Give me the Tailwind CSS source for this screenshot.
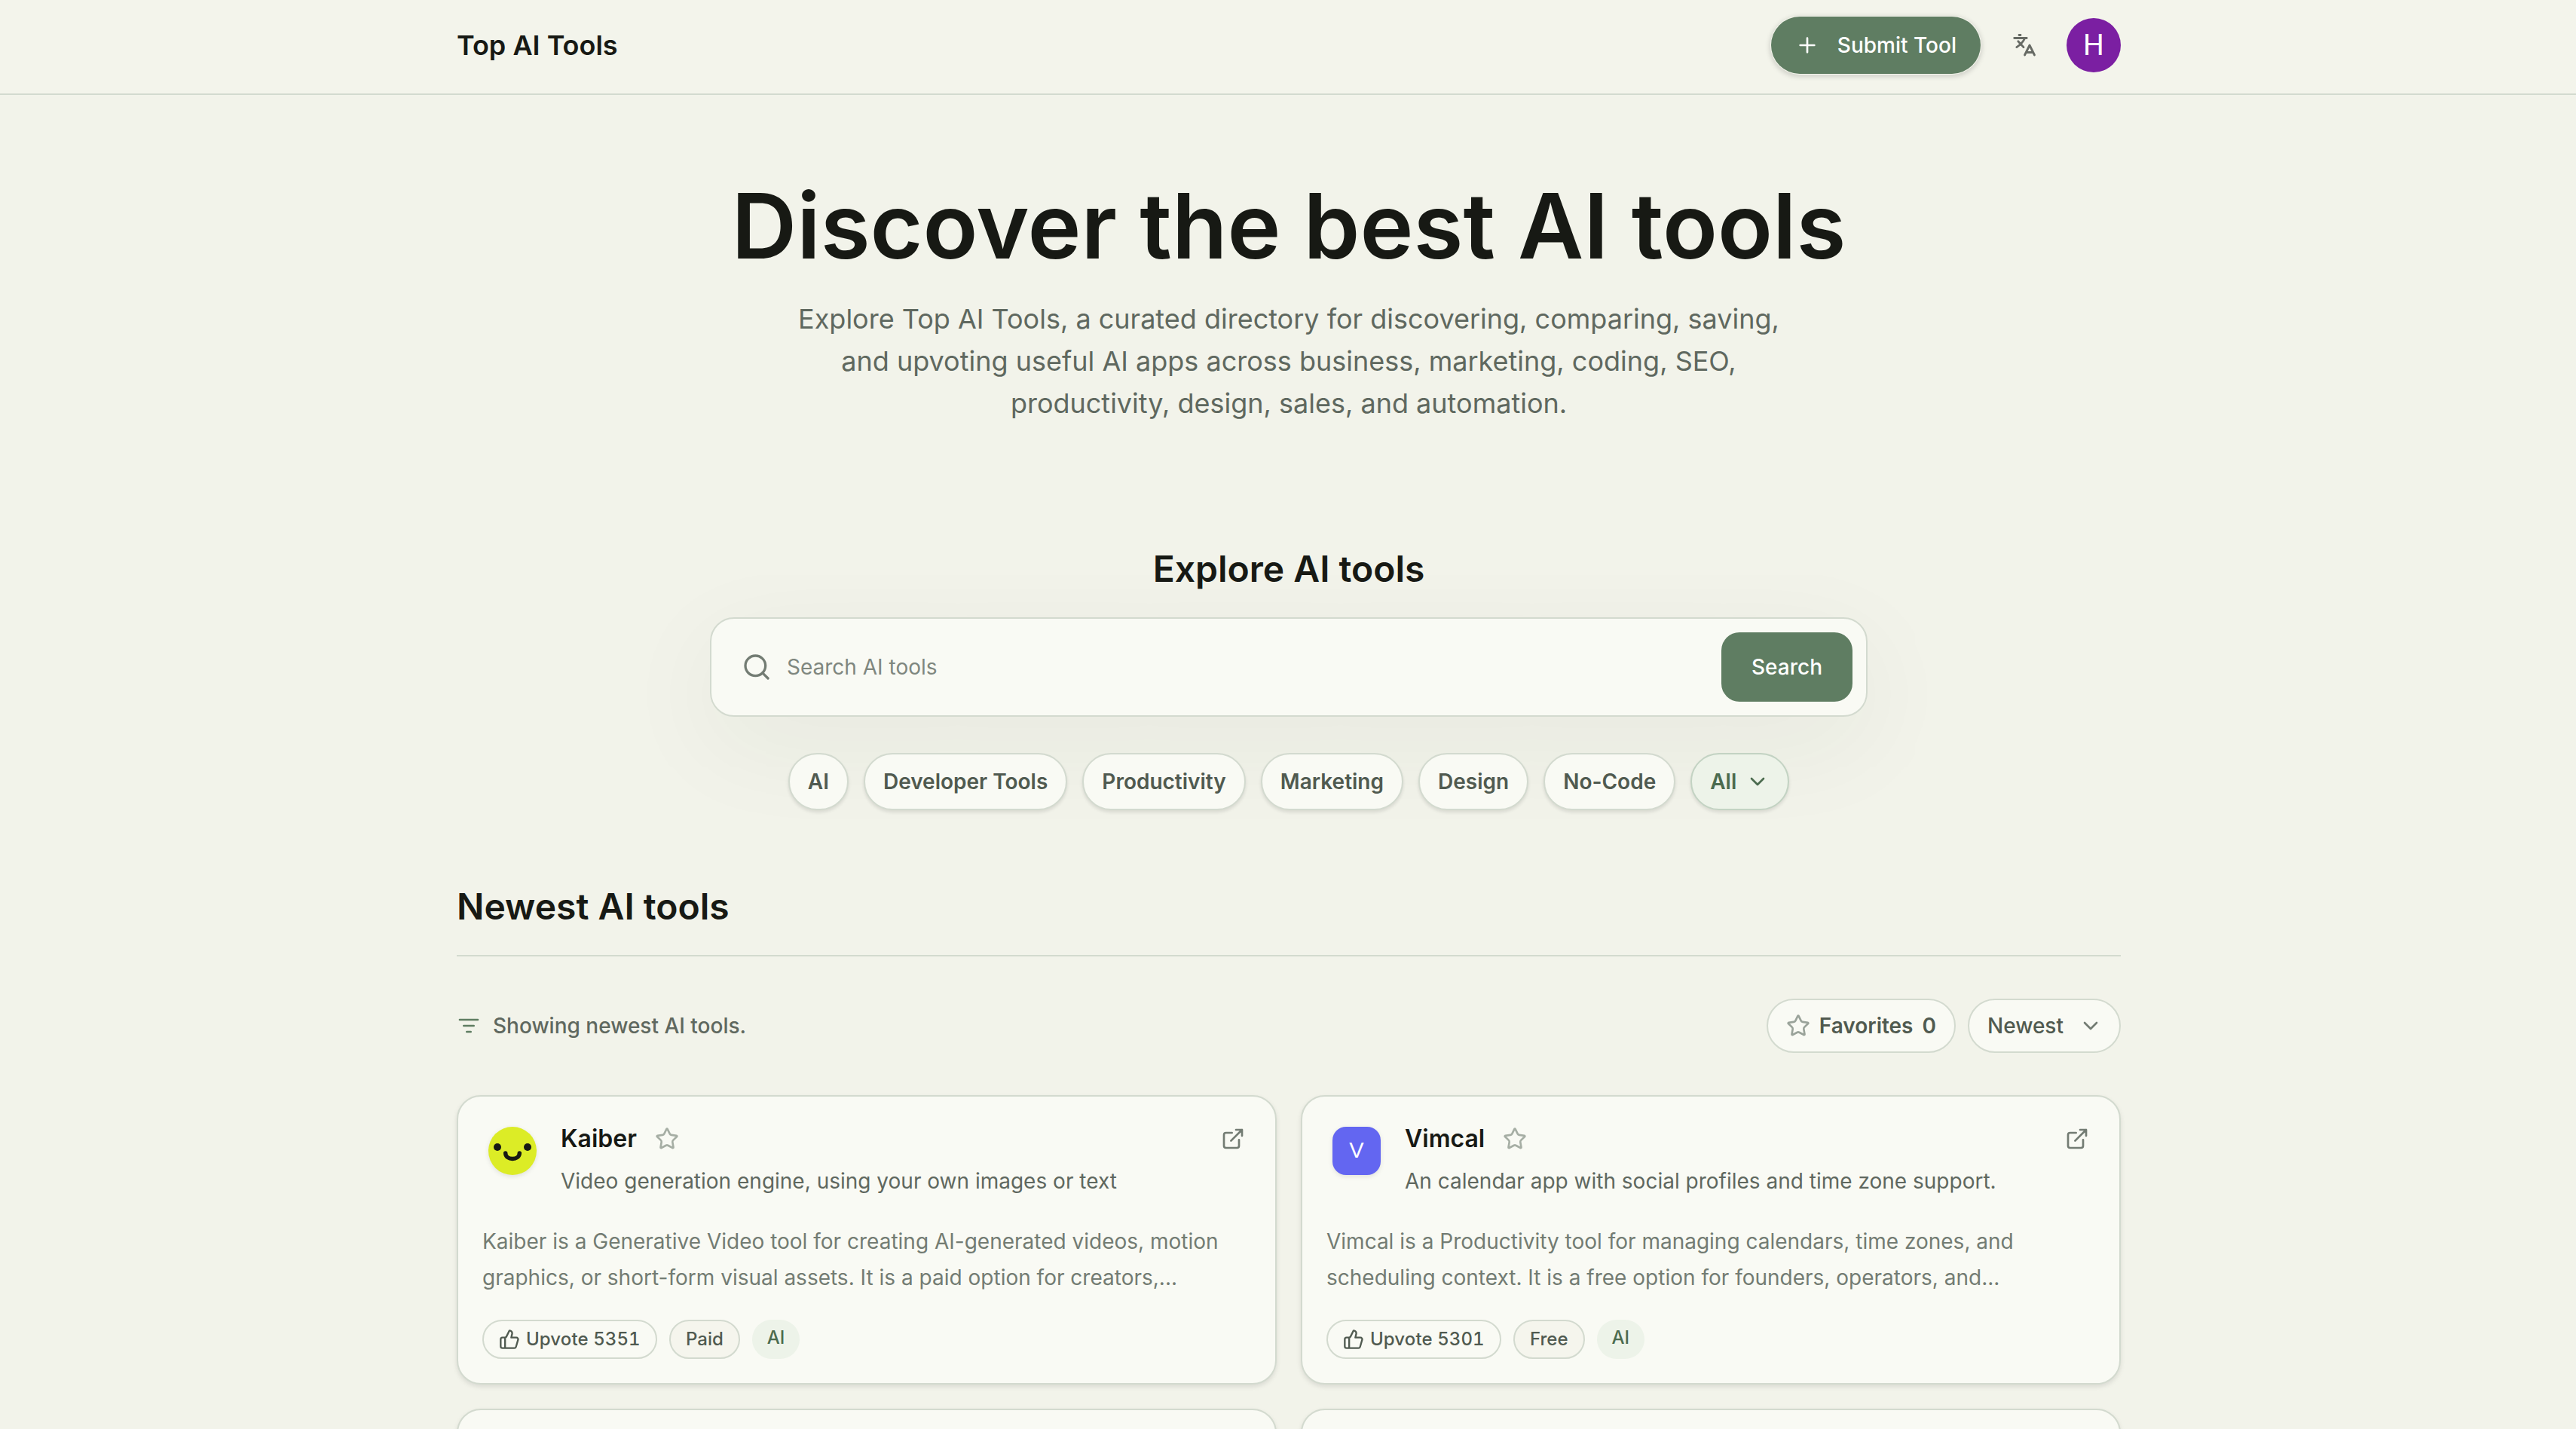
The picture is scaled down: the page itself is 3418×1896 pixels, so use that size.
<!DOCTYPE html>
<html lang="en" class="text-[32px]">

<head>
    <meta charset="UTF-8">
    <meta name="viewport" content="width=device-width, initial-scale=1">
    <title>Top AI Tools</title>
    <script src="https://cdn.jsdelivr.net/npm/@tailwindcss/browser@4"></script>
</head>

<body class="h-screen overflow-hidden bg-[#f2f3ea] pl-[2px] font-['Inter',sans-serif] text-[#171914] antialiased">
    <!-- Icons -->
    <svg class="hidden">
        <symbol id="star" viewBox="0 0 24 24">
            <path d="M11.525 2.295a.53.53 0 0 1 .95 0l2.31 4.679a2.123 2.123 0 0 0 1.595 1.16l5.166.756a.53.53 0 0 1 .294.904l-3.736 3.638a2.123 2.123 0 0 0-.611 1.878l.882 5.14a.53.53 0 0 1-.771.56l-4.618-2.428a2.122 2.122 0 0 0-1.973 0L6.396 21.01a.53.53 0 0 1-.77-.56l.881-5.139a2.122 2.122 0 0 0-.611-1.879L2.16 9.795a.53.53 0 0 1 .294-.906l5.165-.755a2.122 2.122 0 0 0 1.597-1.16z" />
        </symbol>
        <symbol id="external" viewBox="0 0 24 24">
            <path d="M15 3h6v6M10 14 21 3M18 13v6a2 2 0 0 1-2 2H5a2 2 0 0 1-2-2V8a2 2 0 0 1 2-2h6" />
        </symbol>
        <symbol id="thumb" viewBox="0 0 24 24">
            <path d="M7 10v12M15 5.88 14 10h5.83a2 2 0 0 1 1.92 2.56l-2.33 8A2 2 0 0 1 17.5 22H4a2 2 0 0 1-2-2v-8a2 2 0 0 1 2-2h2.76a2 2 0 0 0 1.79-1.11L12 2a3.13 3.13 0 0 1 3 3.88Z" />
        </symbol>
        <symbol id="chevron" viewBox="0 0 24 24">
            <path d="m6 9 6 6 6-6" />
        </symbol>
    </svg>

    <!-- Header -->
    <header class="-ml-[2px] h-[126px] border-b-2 border-[#d3dacf] bg-[#f3f4eb] pl-[2px]">
        <div class="mx-auto flex h-[120px] w-[2208px] items-center justify-between">
            <a class="text-lg font-semibold">Top AI Tools</a>
            <div class="flex items-center gap-[20px]">
                <button class="flex h-[80px] items-center gap-[24px] rounded-full border-2 border-transparent bg-[#5f7d62] bg-clip-padding px-[32px] text-sm font-medium text-white shadow-[0_2px_6px_rgba(0,0,0,0.15)]">
                    <svg class="size-[32px] fill-none stroke-current stroke-2" viewBox="0 0 24 24" stroke-linecap="round">
                        <path d="M5 12h14M12 5v14" />
                    </svg>
                    Submit Tool
                </button>
                <button class="flex size-[72px] items-center justify-center">
                    <svg class="size-[36px] fill-none stroke-[#666a64] stroke-[2.8]" viewBox="0 0 36 36" stroke-linecap="round" stroke-linejoin="round">
                        <path d="M11 4.500h2M4.700 8.500h16.500M18.500 9C16.500 13.500 12.500 17.500 7.800 20.600M9.800 12.700 17 20.600M18.500 31 25 18 31.500 31M20.500 27.500h8.500" />
                    </svg>
                </button>
                <div class="flex size-[72px] items-center justify-center rounded-full bg-[#7b1fa2] font-['Roboto',sans-serif] text-[39px] text-white">H</div>
            </div>
        </div>
    </header>

    <main class="mx-auto w-[2208px]">
        <!-- Hero -->
        <section class="pt-[114px] text-center">
            <h1 class="text-[120px] leading-none font-semibold">Discover the best AI tools</h1>
            <p class="mx-auto mt-[35px] w-[1344px] text-lg leading-[56px] text-[#5f685f]">Explore Top AI Tools, a curated directory for discovering, comparing, saving, and upvoting useful AI apps across business, marketing, coding, SEO, productivity, design, sales, and automation.</p>
        </section>

        <!-- Search -->
        <section class="mx-auto mt-[160px] w-[1536px]">
            <h2 class="text-center text-2xl leading-[64px] font-semibold">Explore AI tools</h2>
            <div class="mt-[32px] flex h-[132px] items-center rounded-[32px] border-2 border-[#d3dacf] bg-[#f9faf4] pr-[18px] pl-[40px] shadow-[0_36px_140px_rgba(34,48,34,0.055)]">
                <svg class="size-[40px] fill-none stroke-[#737c73] stroke-2" viewBox="0 0 24 24" stroke-linecap="round">
                    <circle cx="11" cy="11" r="8" />
                    <path d="m21 21-4.300-4.300" />
                </svg>
                <span class="ml-[20px] flex-1 text-sm text-[#7f877f]">Search AI tools</span>
                <button class="h-[92px] w-[174px] rounded-[24px] bg-[#5f7d62] text-sm font-medium text-white">Search</button>
            </div>
            <div class="mt-[48px] flex justify-center gap-[20px] text-sm font-semibold text-[#505a50]">
                <span class="flex h-[76px] items-center rounded-full border-2 border-[#d3dacf] bg-[#f9faf4] px-[24px] shadow-[0_3px_4px_rgba(0,0,0,0.1)]">AI</span>
                <span class="flex h-[76px] items-center rounded-full border-2 border-[#d3dacf] bg-[#f9faf4] px-[24px] shadow-[0_3px_4px_rgba(0,0,0,0.1)]">Developer Tools</span>
                <span class="flex h-[76px] items-center rounded-full border-2 border-[#d3dacf] bg-[#f9faf4] px-[24px] shadow-[0_3px_4px_rgba(0,0,0,0.1)]">Productivity</span>
                <span class="flex h-[76px] items-center rounded-full border-2 border-[#d3dacf] bg-[#f9faf4] px-[24px] shadow-[0_3px_4px_rgba(0,0,0,0.1)]">Marketing</span>
                <span class="flex h-[76px] items-center rounded-full border-2 border-[#d3dacf] bg-[#f9faf4] px-[24px] shadow-[0_3px_4px_rgba(0,0,0,0.1)]">Design</span>
                <span class="flex h-[76px] items-center rounded-full border-2 border-[#d3dacf] bg-[#f9faf4] px-[24px] shadow-[0_3px_4px_rgba(0,0,0,0.1)]">No-Code</span>
                <span class="flex h-[76px] items-center gap-[12px] rounded-full border-2 border-[#c3d3c3] bg-[#edf3e9] px-[24px] text-[#4b6b4f] shadow-[0_3px_4px_rgba(0,0,0,0.1)]">
                    All
                    <svg class="size-[32px] fill-none stroke-current stroke-2" stroke-linecap="round" stroke-linejoin="round"><use href="#chevron" /></svg>
                </span>
            </div>
        </section>

        <!-- Newest tools -->
        <section class="mt-[96px]">
            <h2 class="border-b-2 border-[#d3dacf] pb-[32px] text-2xl leading-[64px] font-semibold">Newest AI tools</h2>
            <div class="mt-[56px] flex h-[72px] items-center justify-between text-sm">
                <div class="flex items-center gap-[16px] font-medium text-[#5f685f]">
                    <svg class="size-[32px] fill-none stroke-[#5f7d62] stroke-2" viewBox="0 0 24 24" stroke-linecap="round">
                        <path d="M3 6h18M7 12h10M10 18h4" />
                    </svg>
                    Showing newest AI tools.
                </div>
                <div class="flex gap-[16px] text-[#505a50]">
                    <button class="flex h-[72px] items-center gap-[12px] rounded-full border-2 border-[#d3dacf] bg-[#f9faf4] px-[24px] font-semibold">
                        <svg class="size-[32px] fill-none stroke-[#9aa39a] stroke-2" stroke-linejoin="round"><use href="#star" /></svg>
                        <span>Favorites</span>
                        <span>0</span>
                    </button>
                    <button class="flex h-[72px] w-[203px] items-center justify-between rounded-full border-2 border-[#d3dacf] bg-[#f9faf4] pr-[22px] pl-[24px] font-medium">
                        Newest
                        <svg class="size-[32px] fill-none stroke-[#737c73] stroke-2" stroke-linecap="round" stroke-linejoin="round"><use href="#chevron" /></svg>
                    </button>
                </div>
            </div>

            <div class="mt-[56px] grid grid-cols-2 gap-[32px]">
                <article class="h-[384px] rounded-[32px] border-2 border-[#d3dacf] bg-[#f9faf4] p-[32px] shadow-[0_3px_6px_rgba(0,0,0,0.1)]">
                    <div class="flex gap-[24px]">
                        <div class="size-[80px] p-[8px]">
                            <svg class="size-[64px] rounded-full bg-[#dcec26] shadow-[0_2px_6px_rgba(0,0,0,0.1)]" viewBox="0 0 64 64">
                                <circle cx="12" cy="27" r="5" fill="#171914" />
                                <circle cx="52" cy="27" r="5" fill="#171914" />
                                <path d="M22.700 35C22.700 45 41.300 45 41.300 35" fill="none" stroke="#171914" stroke-width="5.500" stroke-linecap="round" />
                            </svg>
                        </div>
                        <div class="flex-1">
                            <div class="flex h-[48px] items-center">
                                <h3 class="text-base font-semibold">Kaiber</h3>
                                <svg class="ml-[24px] size-[32px] fill-none stroke-[#a6aea4] stroke-2" stroke-linejoin="round"><use href="#star" /></svg>
                                <svg class="mr-[8px] ml-auto size-[32px] fill-none stroke-[#737c73] stroke-2" stroke-linecap="round" stroke-linejoin="round"><use href="#external" /></svg>
                            </div>
                            <p class="mt-[8px] text-sm leading-[48px] text-[#5f685f]">Video generation engine, using your own images or text</p>
                        </div>
                    </div>
                    <p class="mt-[32px] text-sm leading-[48px] text-[#737c73]">Kaiber is a Generative Video tool for creating AI-generated videos, motion<br>graphics, or short-form visual assets. It is a paid option for creators,...</p>
                    <div class="mt-[32px] flex h-[52px] gap-[16px] text-xs leading-[48px] font-medium text-[#505a50]">
                        <span class="flex w-[232px] items-center gap-[8px] rounded-full border-2 border-[#d3dacf] pl-[20px] tracking-[0.1px] whitespace-nowrap tabular-nums">
                            <svg class="size-[28px] fill-none stroke-current stroke-2" stroke-linecap="round" stroke-linejoin="round"><use href="#thumb" /></svg>
                            Upvote 5351
                        </span>
                        <span class="rounded-full border-2 border-[#d3dacf] bg-[#f5f5ed] px-[20px]">Paid</span>
                        <span class="rounded-full bg-[#edf3e9] px-[20px] text-[#4b6b4f]">AI</span>
                    </div>
                </article>

                <article class="h-[384px] rounded-[32px] border-2 border-[#d3dacf] bg-[#f9faf4] p-[32px] shadow-[0_3px_6px_rgba(0,0,0,0.1)]">
                    <div class="flex gap-[24px]">
                        <div class="size-[80px] p-[8px]">
                            <div class="flex size-[64px] items-center justify-center rounded-[18px] bg-[#6366f1] font-['Liberation_Sans',sans-serif] text-[29px] text-white shadow-[0_2px_6px_rgba(0,0,0,0.1)]">V</div>
                        </div>
                        <div class="flex-1">
                            <div class="flex h-[48px] items-center">
                                <h3 class="text-base font-semibold">Vimcal</h3>
                                <svg class="ml-[24px] size-[32px] fill-none stroke-[#a6aea4] stroke-2" stroke-linejoin="round"><use href="#star" /></svg>
                                <svg class="mr-[8px] ml-auto size-[32px] fill-none stroke-[#737c73] stroke-2" stroke-linecap="round" stroke-linejoin="round"><use href="#external" /></svg>
                            </div>
                            <p class="mt-[8px] text-sm leading-[48px] text-[#5f685f]">An calendar app with social profiles and time zone support.</p>
                        </div>
                    </div>
                    <p class="mt-[32px] text-sm leading-[48px] text-[#737c73]">Vimcal is a Productivity tool for managing calendars, time zones, and<br>scheduling context. It is a free option for founders, operators, and...</p>
                    <div class="mt-[32px] flex h-[52px] gap-[16px] text-xs leading-[48px] font-medium text-[#505a50]">
                        <span class="flex w-[232px] items-center gap-[8px] rounded-full border-2 border-[#d3dacf] pl-[20px] tracking-[0.1px] whitespace-nowrap tabular-nums">
                            <svg class="size-[28px] fill-none stroke-current stroke-2" stroke-linecap="round" stroke-linejoin="round"><use href="#thumb" /></svg>
                            Upvote 5301
                        </span>
                        <span class="rounded-full border-2 border-[#d3dacf] bg-[#f5f5ed] px-[20px]">Free</span>
                        <span class="rounded-full bg-[#edf3e9] px-[20px] text-[#4b6b4f]">AI</span>
                    </div>
                </article>

                <!-- Next row, cut off by the viewport -->
                <article class="h-[384px] rounded-[32px] border-2 border-[#d3dacf] bg-[#f9faf4] shadow-[0_3px_6px_rgba(0,0,0,0.1)]"></article>
                <article class="h-[384px] rounded-[32px] border-2 border-[#d3dacf] bg-[#f9faf4] shadow-[0_3px_6px_rgba(0,0,0,0.1)]"></article>
            </div>
        </section>
    </main>
</body>

</html>
